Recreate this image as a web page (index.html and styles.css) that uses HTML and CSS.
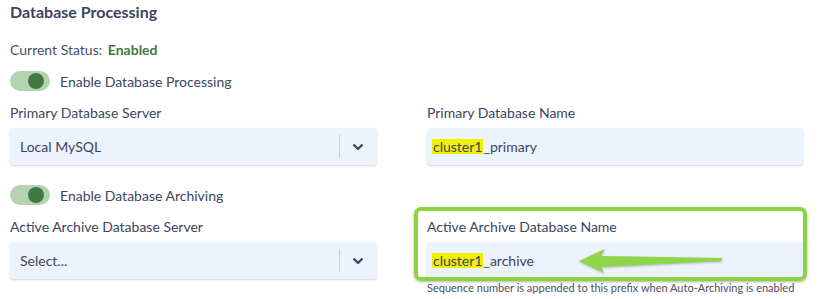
FILE: index.html
```html
<!DOCTYPE html>
<html>
<head>
    <title>Database Processing</title>
    <link rel="stylesheet" href="styles.css">
</head>
<body>
    <div class="page">
        <h2 class="title">Database Processing</h2>
        <div class="status">Current Status: <strong>Enabled</strong></div>

        <label class="switch-row">
            <span class="switch"><span class="knob"></span></span>
            Enable Database Processing
        </label>

        <div class="grid">
            <div class="field">
                <div class="label">Primary Database Server</div>
                <div class="select">
                    <span class="value">Local MySQL</span>
                    <span class="sep"></span>
                    <svg class="chevron" width="12" height="8" viewBox="0 0 12 8"><path d="M1.5 1.5 L6 6 L10.5 1.5" fill="none" stroke="#3c4560" stroke-width="2.4" stroke-linejoin="round"/></svg>
                </div>
            </div>
            <div class="field">
                <div class="label">Primary Database Name</div>
                <div class="input"><mark>cluster1</mark>_primary</div>
            </div>
        </div>

        <label class="switch-row second">
            <span class="switch"><span class="knob"></span></span>
            Enable Database Archiving
        </label>

        <div class="grid">
            <div class="field">
                <div class="label">Active Archive Database Server</div>
                <div class="select">
                    <span class="value">Select...</span>
                    <span class="sep"></span>
                    <svg class="chevron" width="12" height="8" viewBox="0 0 12 8"><path d="M1.5 1.5 L6 6 L10.5 1.5" fill="none" stroke="#3c4560" stroke-width="2.4" stroke-linejoin="round"/></svg>
                </div>
            </div>
            <div class="field">
                <div class="highlighted">
                    <div class="label">Active Archive Database Name</div>
                    <div class="input"><mark>cluster1</mark>_archive</div>
                </div>
                <div class="help">Sequence number is appended to this prefix when Auto-Archiving is enabled</div>
                <div class="ring"></div>
                <svg class="arrow" width="160" height="35" viewBox="0 0 160 35">
                    <polygon points="9,17 35,5 31,12 152,14 152,17 31,23 34,29" fill="#8fd548"/>
                </svg>
            </div>
        </div>
    </div>
</body>
</html>
```

FILE: styles.css
```css
body { margin: 0; background: #fff; font-family: Lato, "Open Sans", sans-serif; color: #3c4560; }
.page { padding: 0 10px; }
.title { margin: 0; font-size: 16px; line-height: 24px; font-weight: 700; color: #3c4560; }
.status { margin-top: 16px; font-size: 14px; line-height: 20px; color: #4a5163; }
.status strong { color: #3d7a3e; margin-left: 2px; }
.switch-row { display: flex; align-items: center; gap: 10px; margin-top: 11px; height: 20px; font-size: 14px; color: #3c4560; }
.switch-row.second { margin-top: 20px; }
.switch { width: 40px; height: 20px; border-radius: 10px; background: #b5d2b3; display: flex; align-items: center; justify-content: flex-end; padding-right: 6px; box-sizing: border-box; }
.knob { width: 16px; height: 16px; border-radius: 50%; background: #3f7b40; }
.grid { display: grid; grid-template-columns: 367px 376px; gap: 50px; margin-top: 12px; }
.field { position: relative; }
.label { font-size: 14px; line-height: 20px; color: #3c4560; margin-bottom: 5px; }
.select, .input { height: 37px; background: #edf3fd; border-radius: 4px; box-shadow: 0 1px 2px rgba(40, 50, 80, 0.22); font-size: 14px; color: #3c4560; display: flex; align-items: center; }
.select { padding-left: 10px; }
.select .value { flex: 1; }
.sep { width: 1px; height: 23px; background: #c9ccd2; }
.chevron { margin: 0 13px 0 12px; }
.input { padding-left: 5px; }
mark { background: #f0f000; color: #3c4560; display: inline-block; line-height: 15px; padding: 0 1px; }
.ring { position: absolute; left: -13px; width: 393px; top: -10px; height: 74px; box-sizing: border-box; border: 4px solid #8bd43f; border-radius: 7px; box-shadow: 0 1px 3px rgba(0, 0, 0, 0.3); pointer-events: none; }
.arrow { position: absolute; left: 143px; top: 27px; filter: drop-shadow(0 1px 1px rgba(0, 0, 0, 0.25)); }
.help { margin-top: 2px; font-size: 11px; line-height: 14px; color: #4a5163; }
```
